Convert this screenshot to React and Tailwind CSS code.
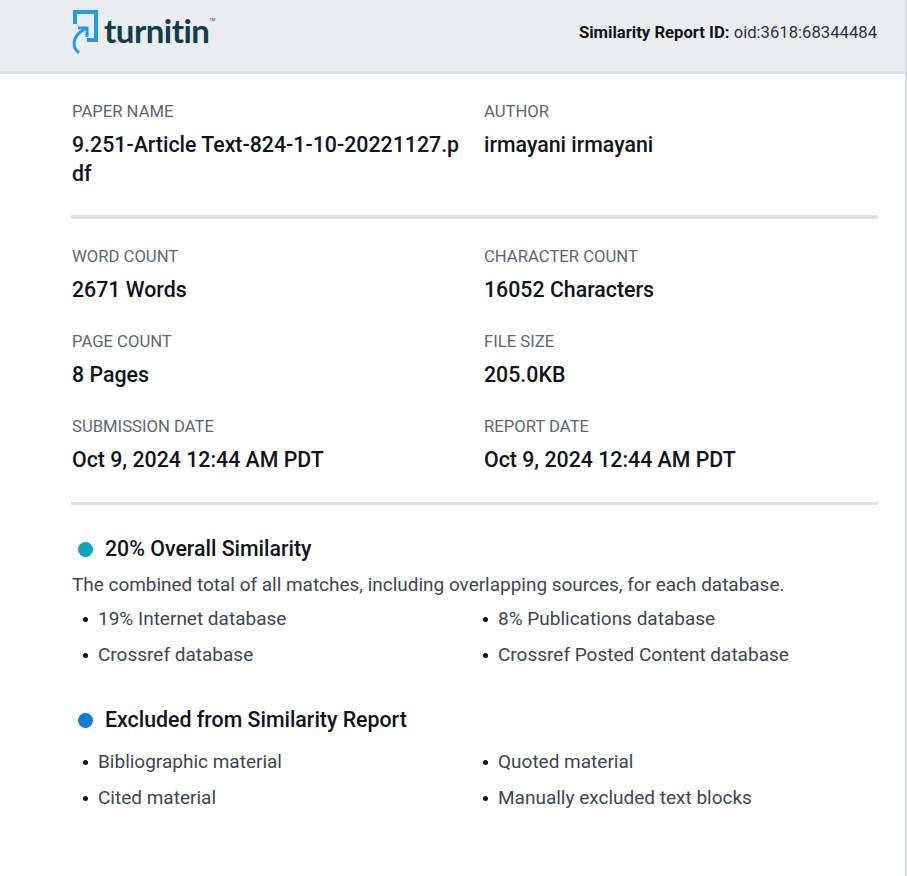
const font = { fontFamily: "Roboto, sans-serif" };

function Field({ label, value }) {
  return (
    <div className="pr-[18px]">
      <div className="text-[16.67px] leading-[20px] text-[#5f6672]">{label}</div>
      <div className="mt-[8px] text-[21.33px] leading-[29px] font-medium text-[#10141c] break-all">{value}</div>
    </div>
  );
}

function Row({ left, right, leftLabel, rightLabel, className = "" }) {
  return (
    <div className={`grid grid-cols-[412px_1fr] ${className}`}>
      <Field label={leftLabel} value={left} />
      <Field label={rightLabel} value={right} />
    </div>
  );
}

function Bullet({ children }) {
  return (
    <div className="flex items-center h-[36px] text-[19px] text-[#3e4553]">
      <span className="w-[5px] h-[5px] rounded-full bg-[#10141c] ml-[11px] mr-[10px]" />
      <span>{children}</span>
    </div>
  );
}

function Heading({ color, children }) {
  return (
    <div className="flex items-center h-[30px]">
      <span className={`w-[15px] h-[15px] rounded-full ml-[6px] mr-[12px] ${color}`} />
      <span className="text-[21.33px] font-medium text-[#10141c]">{children}</span>
    </div>
  );
}

function Bullets({ items }) {
  return (
    <div className="grid grid-cols-[400px_1fr]">
      {items.map((t) => <Bullet key={t}>{t}</Bullet>)}
    </div>
  );
}

function Logo() {
  return (
    <div className="flex items-start">
      <svg width="30" height="46" viewBox="0 0 30 46" className="mt-[8px]" fill="none">
        <path d="M4 16V4H25V32H16" stroke="#1e9bf0" strokeWidth="4" />
        <path d="M7 44C1 38 1 28 14 21" stroke="#1e9bf0" strokeWidth="3" strokeLinecap="round" />
        <path d="M7 20H16V29" stroke="#1e9bf0" strokeWidth="3" />
      </svg>
      <span className="ml-[3px] mt-[8px] text-[33px] leading-[44px] font-bold text-[#0f3d4c] tracking-[-0.5px]" style={{ fontFamily: "Lato, sans-serif" }}>turnitin</span>
      <span className="text-[4px] mt-[17px] text-[#0f3d4c]">TM</span>
    </div>
  );
}

export default function App() {
  return (
    <div className="w-[907px] h-[876px] bg-white border-r-2 border-[#d9dbde] overflow-hidden" style={font}>
      <header className="h-[74px] bg-[#ebecee] border-b-[3px] border-[#dcdee1] pl-[71px] pr-[28px] flex justify-between items-start">
        <Logo />
        <div className="mt-[22px] text-[16.67px] leading-[22px] text-[#2c3340]"><span className="font-bold text-[#10141c]">Similarity Report ID:</span> oid:3618:68344484</div>
      </header>
      <main className="pl-[72px] pr-[27px]">
        <Row className="pt-[28px]" leftLabel="PAPER NAME" left="9.251-Article Text-824-1-10-20221127.pdf" rightLabel="AUTHOR" right="irmayani irmayani" />
        <div className="-ml-px mt-[27px] border-t-[4px] border-[#dfe0e2]" />
        <Row className="mt-[28px]" leftLabel="WORD COUNT" left="2671 Words" rightLabel="CHARACTER COUNT" right="16052 Characters" />
        <Row className="mt-[28px]" leftLabel="PAGE COUNT" left="8 Pages" rightLabel="FILE SIZE" right="205.0KB" />
        <Row className="mt-[28px]" leftLabel="SUBMISSION DATE" left="Oct 9, 2024 12:44 AM PDT" rightLabel="REPORT DATE" right="Oct 9, 2024 12:44 AM PDT" />
        <div className="-ml-px mt-[28px] border-t-[3px] border-[#dfe0e2]" />
        <div className="mt-[29px]"><Heading color="bg-[#0ca3b8]">20% Overall Similarity</Heading></div>
        <p className="mt-[8px] text-[18.97px] leading-[26px] text-[#3e4553]">The combined total of all matches, including overlapping sources, for each database.</p>
        <div className="mt-[3px]">
          <Bullets items={["19% Internet database", "8% Publications database", "Crossref database", "Crossref Posted Content database"]} />
        </div>
        <div className="mt-[32px]"><Heading color="bg-[#0d7dd8]">Excluded from Similarity Report</Heading></div>
        <div className="mt-[9px]">
          <Bullets items={["Bibliographic material", "Quoted material", "Cited material", "Manually excluded text blocks"]} />
        </div>
      </main>
    </div>
  );
}
